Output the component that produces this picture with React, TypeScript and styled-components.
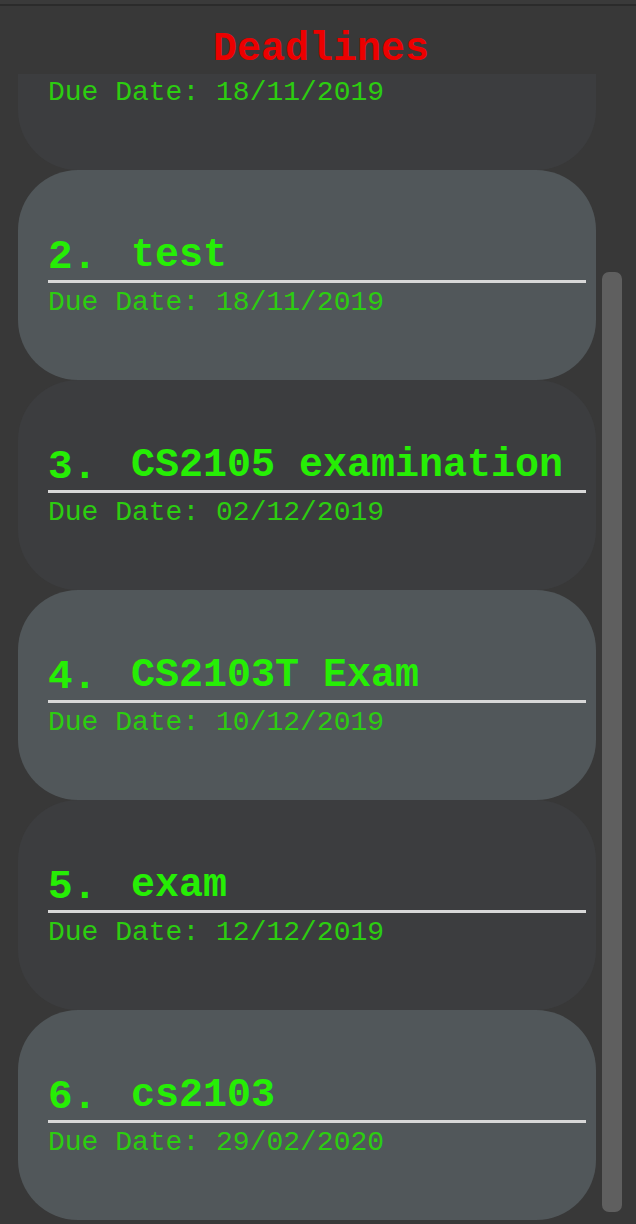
import React, { useLayoutEffect, useRef } from "react";
import styled, { createGlobalStyle } from "styled-components";

const GlobalStyle = createGlobalStyle`
  html, body {
    margin: 0;
    padding: 0;
    background: #383838;
    overflow: hidden;
  }
  * { box-sizing: border-box; }
`;

const Window = styled.div`
  width: 636px;
  height: 1224px;
  display: flex;
  flex-direction: column;
  background: #383838;
  font-family: "Liberation Mono", "Courier New", monospace;
`;

const TopStrip = styled.div`
  height: 6px;
  flex: none;
  background: #3a3a3a;
  border-bottom: 2px solid #2b2b2b;
`;

const Header = styled.div`
  height: 68px;
  flex: none;
  padding: 22px 0 0 6px;
  text-align: center;
`;

const HeaderTitle = styled.h1`
  margin: 0;
  font-size: 40px;
  line-height: 44px;
  font-weight: 700;
  color: #ec0000;
`;

const Body = styled.div`
  flex: 1;
  display: flex;
  min-height: 0;
`;

const ListViewport = styled.div`
  width: 602px;
  height: 100%;
  overflow: hidden;
`;

const List = styled.div`
  display: flex;
  flex-direction: column;
  padding: 0 6px 4px 18px;
`;

const Card = styled.div<{ $alt: boolean }>`
  height: 210px;
  width: 578px;
  border-radius: 60px;
  background: ${(p) => (p.$alt ? "#51575a" : "#3c3d3f")};
  padding: 63px 10px 0 30px;
  display: flex;
  flex-direction: column;
`;

const TitleRow = styled.div`
  display: flex;
  align-items: baseline;
  height: 50px;
  padding-bottom: 2px;
  border-bottom: 3px solid #d8d8d8;
  font-weight: 700;
  color: #26ee05;
  white-space: nowrap;
`;

const Index = styled.span`
  width: 83px;
  flex: none;
  font-size: 41px;
  line-height: 44px;
  transform: translateY(2px);
`;

const Name = styled.span`
  font-size: 40px;
  line-height: 44px;
`;

const DueDate = styled.div`
  margin-top: 4px;
  font-size: 28px;
  line-height: 32px;
  color: #2ccd10;
  white-space: nowrap;
`;

const ScrollTrack = styled.div`
  width: 20px;
  flex: none;
  display: flex;
  flex-direction: column;
`;

const ScrollThumb = styled.div`
  margin-top: 198px;
  height: 940px;
  border-radius: 7px;
  background: #5f5f5f;
`;

const deadlines = [
  { name: "test", date: "18/11/2019" },
  { name: "test", date: "18/11/2019" },
  { name: "CS2105 examination", date: "02/12/2019" },
  { name: "CS2103T Exam", date: "10/12/2019" },
  { name: "exam", date: "12/12/2019" },
  { name: "cs2103", date: "29/02/2020" },
];

export default function App() {
  const viewport = useRef<HTMLDivElement>(null);

  useLayoutEffect(() => {
    if (viewport.current) viewport.current.scrollTop = 114;
  }, []);

  return (
    <Window>
      <GlobalStyle />
      <TopStrip />
      <Header>
        <HeaderTitle>Deadlines</HeaderTitle>
      </Header>
      <Body>
        <ListViewport ref={viewport}>
          <List>
            {deadlines.map((d, i) => (
              <Card key={i} $alt={i % 2 === 1}>
                <TitleRow>
                  <Index>{i + 1}.</Index>
                  <Name>{d.name}</Name>
                </TitleRow>
                <DueDate>Due Date: {d.date}</DueDate>
              </Card>
            ))}
          </List>
        </ListViewport>
        <ScrollTrack>
          <ScrollThumb />
        </ScrollTrack>
      </Body>
    </Window>
  );
}
